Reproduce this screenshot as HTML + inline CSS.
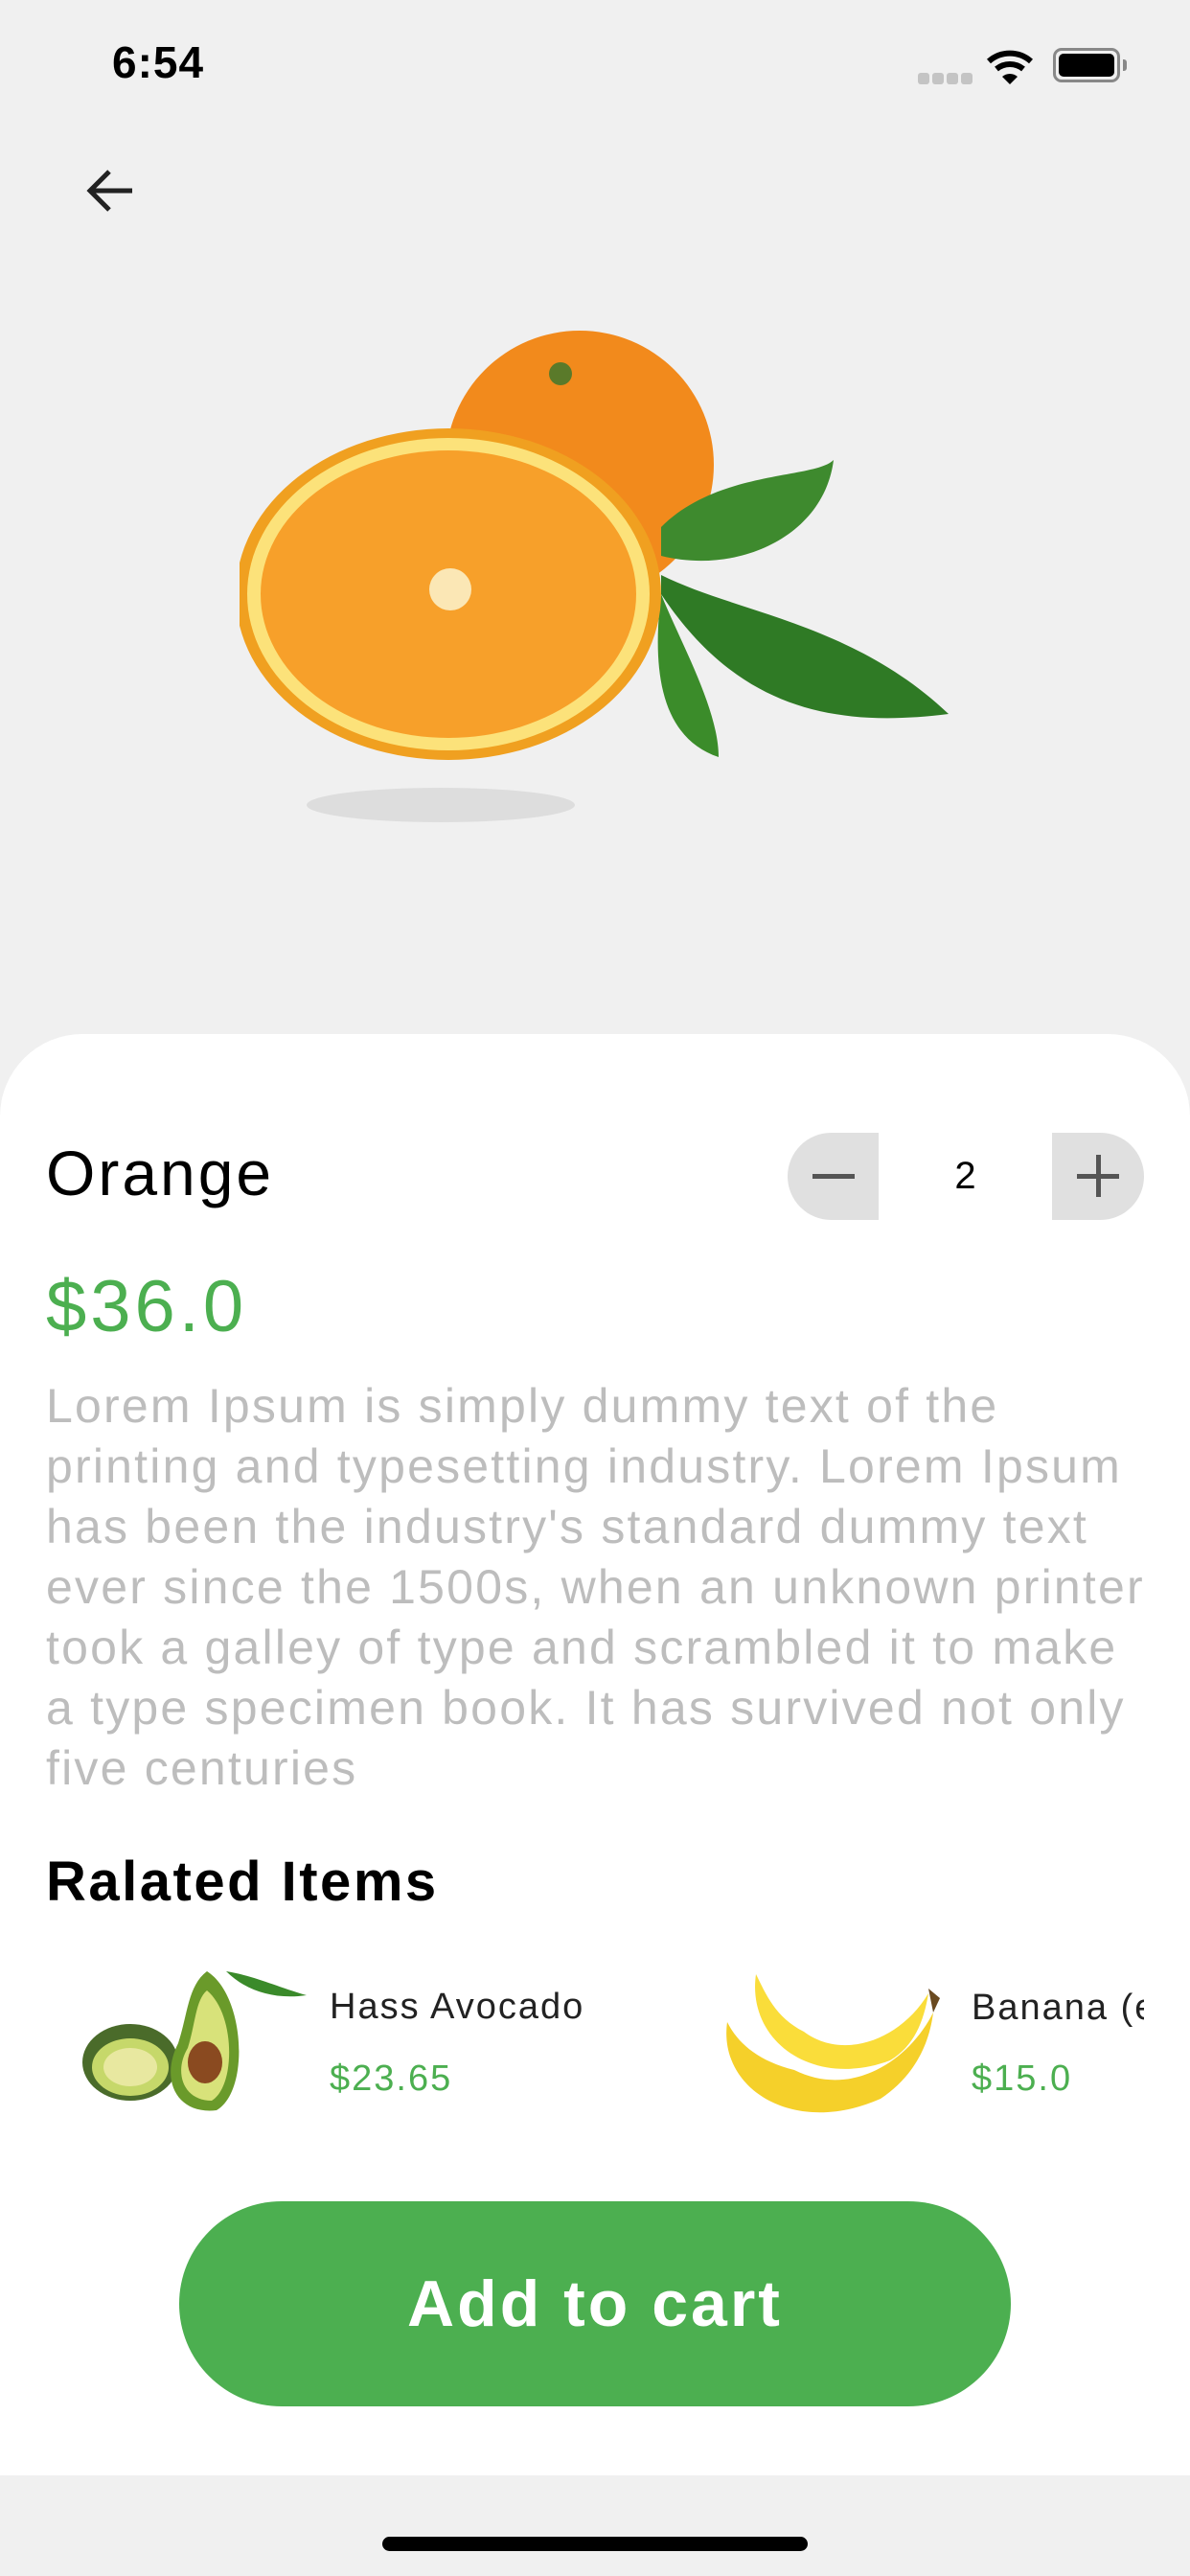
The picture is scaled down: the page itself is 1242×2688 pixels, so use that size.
<!DOCTYPE html>
<html><head><meta charset="utf-8"><style>
*{margin:0;padding:0;box-sizing:border-box}
body{width:1242px;height:2688px;background:#f0f0f0;font-family:"Liberation Sans",sans-serif;position:relative;overflow:hidden}
.abs{position:absolute}
.card{left:0;top:1079px;width:1242px;height:1504px;background:#fff;border-radius:86px 86px 0 0}
.t{white-space:nowrap}
</style></head><body>
<div class="abs t" style="left:117px;top:38px;font-size:46px;font-weight:bold;color:#000;letter-spacing:1px">6:54</div>
<div class="abs" style="left:958px;top:76px;width:12px;height:12px;border-radius:3px;background:#c4c4c4"></div>
<div class="abs" style="left:973px;top:76px;width:12px;height:12px;border-radius:3px;background:#c4c4c4"></div>
<div class="abs" style="left:988px;top:76px;width:12px;height:12px;border-radius:3px;background:#c4c4c4"></div>
<div class="abs" style="left:1003px;top:76px;width:12px;height:12px;border-radius:3px;background:#c4c4c4"></div>
<svg class="abs" style="left:1030px;top:48px" width="50" height="40" viewBox="0 0 50 40"><path d="M2 16 A33 33 0 0 1 46 16" stroke="#000" stroke-width="6" fill="none"/><path d="M10 24 A22 22 0 0 1 38 24" stroke="#000" stroke-width="6" fill="none"/><path d="M16 32 L24 40 L32 32 A12 12 0 0 0 16 32Z" fill="#000"/></svg>
<div class="abs" style="left:1099px;top:50px;width:70px;height:36px;border:3px solid #888;border-radius:9px;padding:3px"><div style="width:100%;height:100%;background:#000;border-radius:5px"></div></div>
<div class="abs" style="left:1172px;top:62px;width:4px;height:12px;background:#888;border-radius:0 3px 3px 0"></div>
<svg class="abs" style="left:88px;top:174px" width="54" height="50" viewBox="0 0 54 50"><path d="M50 25H6M26 5L6 25L26 45" stroke="#222" stroke-width="5" fill="none"/></svg>
<svg class="abs" style="left:250px;top:320px" width="750" height="560" viewBox="0 0 750 560">
<ellipse cx="210" cy="520" rx="140" ry="18" fill="#ddd"/>
<circle cx="355" cy="165" r="140" fill="#f28a1c"/>
<circle cx="335" cy="70" r="12" fill="#5a7a2a"/>
<path d="M440 230 C500 170 600 180 620 160 C610 240 520 280 440 260Z" fill="#3e8a2e"/>
<path d="M440 280 C520 320 640 330 740 425 C620 440 520 420 440 300Z" fill="#2f7a25"/>
<path d="M440 300 C460 350 500 420 500 470 C440 450 430 380 440 300Z" fill="#3b8c2a"/>
<ellipse cx="218" cy="300" rx="222" ry="173" fill="#f0a020"/>
<ellipse cx="218" cy="300" rx="210" ry="163" fill="#fce27a"/>
<ellipse cx="218" cy="300" rx="196" ry="150" fill="#f7a02a"/>
<circle cx="220" cy="295" r="22" fill="#fbe7b5"/>
</svg>
<div class="abs card"></div>
<div class="abs t" style="left:48px;top:1186px;font-size:66px;color:#000;letter-spacing:3px">Orange</div>
<div class="abs" style="left:822px;top:1182px;width:372px;height:91px;border-radius:46px;background:#e0e0e0;overflow:hidden">
<div class="abs" style="left:95px;top:0;width:181px;height:91px;background:#fff;text-align:center;line-height:91px;font-size:40px;color:#000">2</div>
<div class="abs" style="left:26px;top:43px;width:44px;height:5px;background:#555"></div>
<div class="abs" style="left:302px;top:43px;width:44px;height:5px;background:#555"></div>
<div class="abs" style="left:322px;top:23px;width:5px;height:44px;background:#555"></div>
</div>
<div class="abs t" style="left:48px;top:1320px;font-size:76px;color:#4caf50;letter-spacing:4px">$36.0</div>
<div class="abs t" style="left:48px;top:1436px;font-size:50px;line-height:63px;color:#bdbdbd;letter-spacing:2.2px">Lorem Ipsum is simply dummy text of the<br>printing and typesetting industry. Lorem Ipsum<br>has been the industry's standard dummy text<br>ever since the 1500s, when an unknown printer<br>took a galley of type and scrambled it to make<br>a type specimen book. It has survived not only<br>five centuries</div>
<div class="abs t" style="left:48px;top:1930px;font-size:58px;font-weight:bold;color:#000;letter-spacing:2.5px">Ralated Items</div>
<svg class="abs" style="left:86px;top:2042px" width="234" height="168" viewBox="0 0 234 168">
<ellipse cx="50" cy="110" rx="50" ry="40" fill="#4a6b2a"/><ellipse cx="50" cy="115" rx="40" ry="30" fill="#c6d86a"/><ellipse cx="50" cy="115" rx="28" ry="20" fill="#e8e8a0"/>
<path d="M130 15 C170 40 175 140 140 160 C100 165 80 130 100 90 C110 60 110 30 130 15Z" fill="#6a9a2a"/><path d="M130 35 C160 60 160 135 135 150 C105 150 95 120 110 95 C118 70 118 45 130 35Z" fill="#d8e27a"/>
<ellipse cx="128" cy="110" rx="18" ry="22" fill="#8a4a20"/>
<path d="M150 15 C180 20 200 30 234 40 C200 45 170 35 150 15Z" fill="#3a8a2a"/>
</svg>
<div class="abs t" style="left:344px;top:2073px;font-size:38px;color:#222;letter-spacing:2px">Hass Avocado</div>
<div class="abs t" style="left:344px;top:2148px;font-size:38px;color:#4caf50;letter-spacing:2px">$23.65</div>
<svg class="abs" style="left:749px;top:2040px" width="234" height="185" viewBox="0 0 234 185">
<path d="M10 70 C0 140 80 190 170 150 C200 130 220 100 225 60 C200 110 140 150 80 120 C40 110 20 90 10 70Z" fill="#f5d02a"/>
<path d="M40 20 C30 90 100 140 180 110 C205 95 215 70 220 40 C190 90 130 110 90 80 C60 65 50 40 40 20Z" fill="#fadd3a"/>
<path d="M220 35 L232 45 L225 60Z" fill="#6a4a20"/>
</svg>
<div class="abs" style="left:1014px;top:2060px;width:180px;overflow:hidden"><div class="t" style="font-size:38px;color:#222;line-height:70px;letter-spacing:2px">Banana (each)</div></div>
<div class="abs t" style="left:1014px;top:2148px;font-size:38px;color:#4caf50;letter-spacing:2px">$15.0</div>
<div class="abs" style="left:187px;top:2297px;width:868px;height:214px;border-radius:107px;background:#4caf50;color:#fff;font-size:68px;font-weight:bold;text-align:center;line-height:214px;letter-spacing:3px">Add to cart</div>
<div class="abs" style="left:399px;top:2647px;width:444px;height:15px;border-radius:8px;background:#000"></div>
</body></html>
